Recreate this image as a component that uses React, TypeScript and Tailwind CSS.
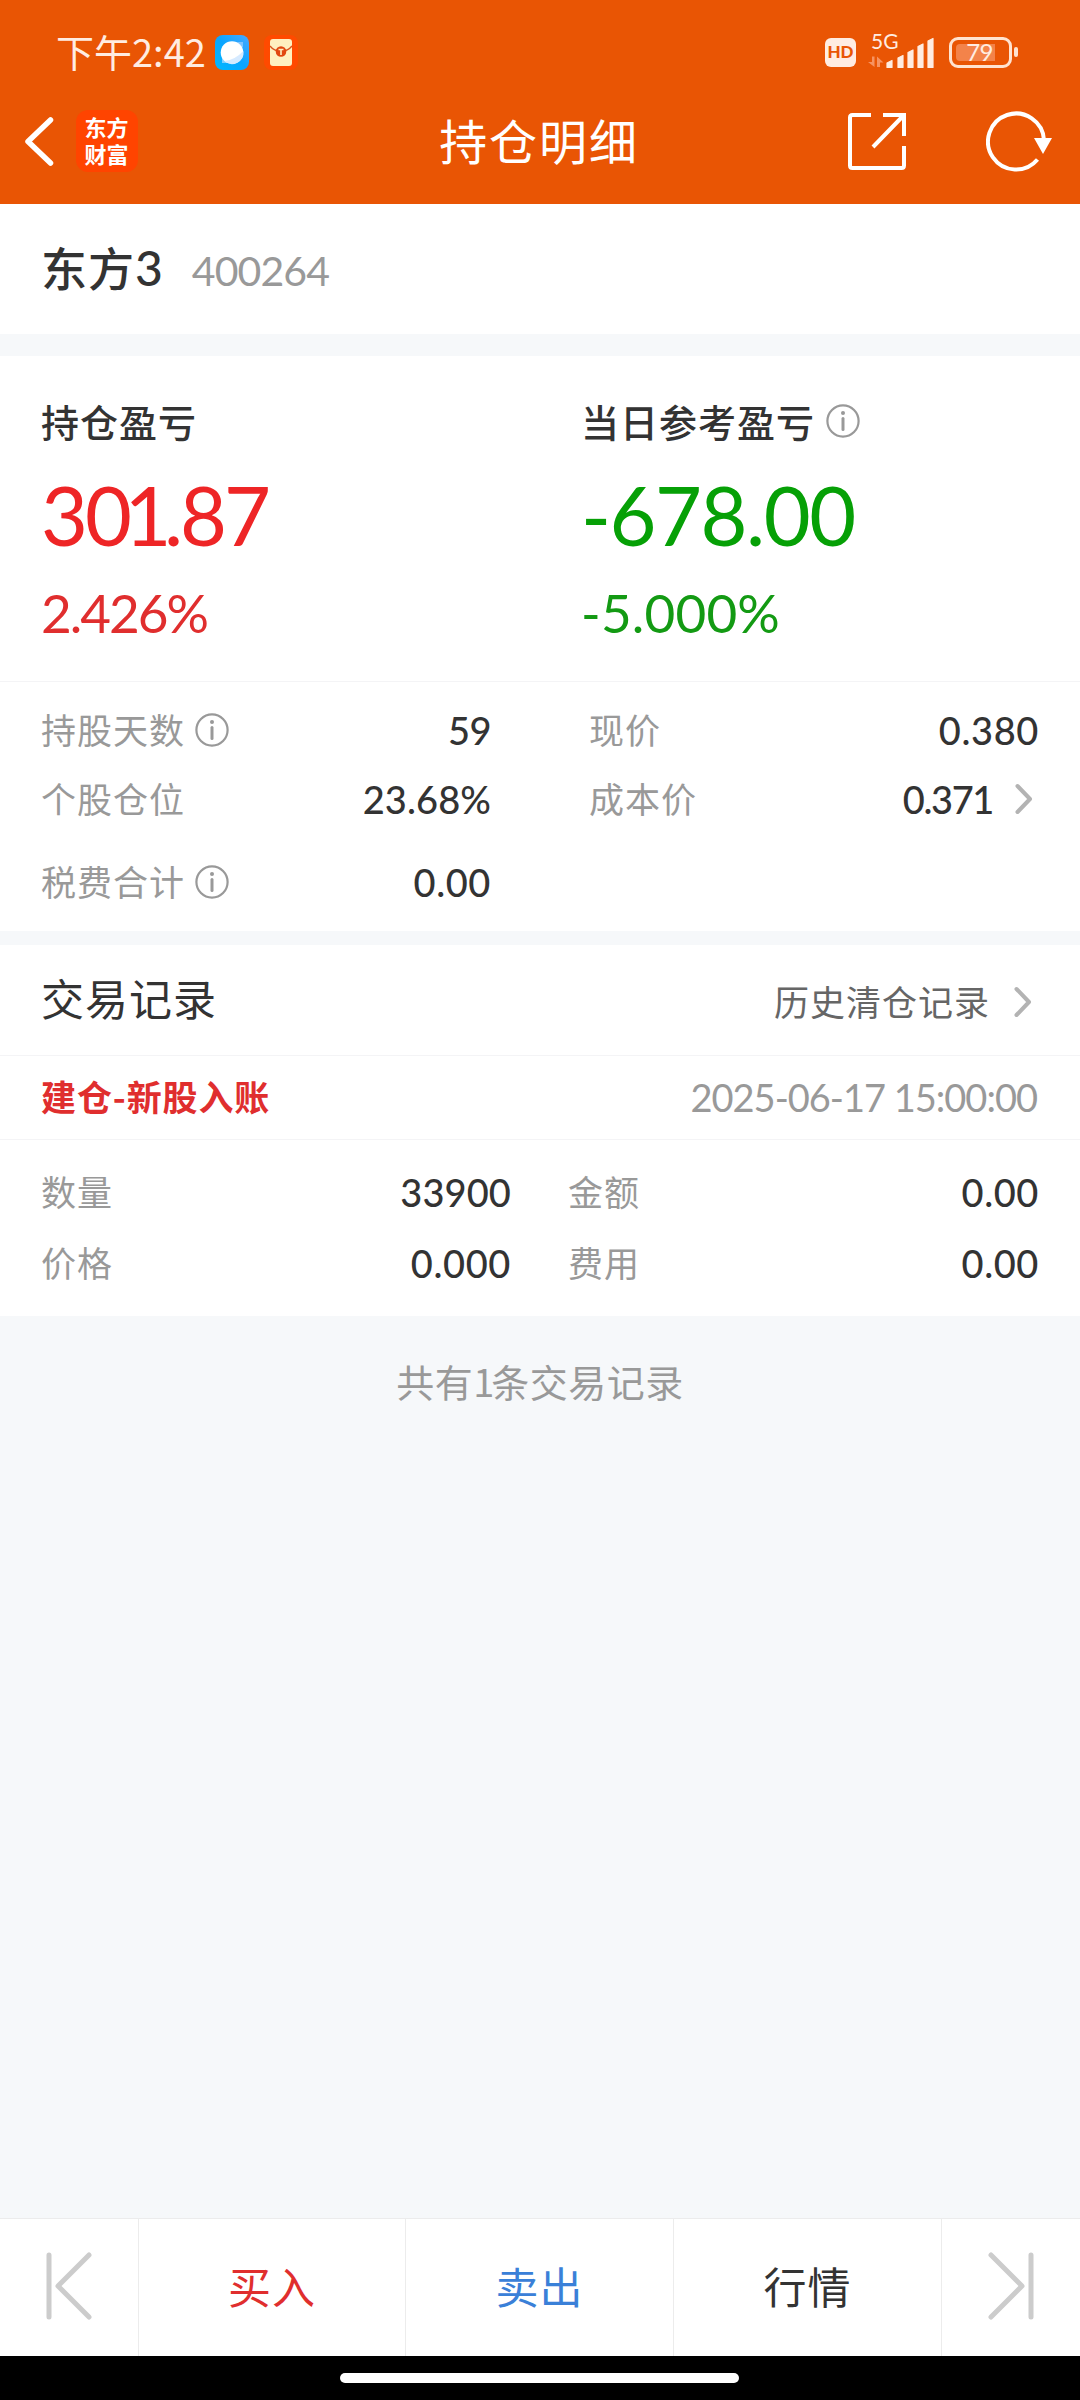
import { FC, ReactNode } from "react";

interface StatProps {
  label: string;
  value: string;
  info?: boolean;
  link?: boolean;
  tracking?: string;
}

const InfoIcon: FC = () => (
  <svg width="34" height="34" viewBox="0 0 34 34" fill="none" className="shrink-0">
    <circle cx="17" cy="17" r="15.6" stroke="#999999" strokeWidth="2.2" />
    <circle cx="17" cy="9" r="2" fill="#999999" />
    <path d="M17 14.5V25.5" stroke="#999999" strokeWidth="3" strokeLinecap="round" />
  </svg>
);

const Chevron: FC = () => (
  <svg width="18" height="32" viewBox="0 0 18 32" fill="none" className="shrink-0">
    <path d="M2.5 3L15 16L2.5 29" stroke="#b3b3b3" strokeWidth="4" strokeLinecap="round" strokeLinejoin="round" />
  </svg>
);

const Stat: FC<StatProps> = ({ label, value, info, link, tracking = "tracking-[0.6px]" }) => (
  <div className="flex h-[50px] items-center justify-between">
    <div className="flex items-center gap-[10px]">
      <span className="pb-[2px] text-[35px] tracking-[1px] text-[#999999]">{label}</span>
      {info && <InfoIcon />}
    </div>
    <div className="flex items-center gap-[22px]">
      <span className={`font-['Lato'] text-[38px] font-medium text-[#333333] ${tracking}`}>{value}</span>
      {link && <div className="mr-[6px]"><Chevron /></div>}
    </div>
  </div>
);

const StatusBar: FC = () => (
  <div className="flex h-[104px] items-center justify-between pl-[56px] pr-[62px]">
    <div className="flex items-center">
      <span className="pb-[3px] text-[38px] leading-none text-[#ffece1]">下午2:42</span>
      <svg width="34" height="35" viewBox="0 0 34 35" className="ml-[9px]">
        <defs>
          <linearGradient id="sky" x1="0" y1="1" x2="1" y2="0">
            <stop offset="0" stopColor="#00b8ff" />
            <stop offset="0.5" stopColor="#0aa5ff" />
            <stop offset="1" stopColor="#4aa8ff" />
          </linearGradient>
        </defs>
        <rect width="34" height="35" rx="8" fill="url(#sky)" />
        <path d="M7 21V28H13Z" fill="#7fd0ff" />
        <path d="M22 7H28V13Z" fill="#7fc3ff" />
        <circle cx="17" cy="17.5" r="11.3" fill="#fff" />
        <path d="M28.3 16A11.3 11.3 0 0 1 9.5 26Q20 25 28.3 16Z" fill="#d6eaff" />
      </svg>
      <svg width="34" height="35" viewBox="0 0 34 35" className="ml-[15px]">
        <rect width="34" height="35" rx="8" fill="#ff4a00" />
        <rect x="6" y="4" width="22" height="27" rx="3" fill="#fff0c0" />
        <path d="M6 11Q10 16 17 16.5Q24 16 28 11" fill="none" stroke="#d9531e" strokeWidth="1.3" />
        <circle cx="17" cy="16.5" r="5.3" fill="#e2470f" />
        <path d="M14.5 14.5H19.5M17 14.5V20" stroke="#fff0c0" strokeWidth="1.6" />
      </svg>
    </div>
    <div className="flex items-center">
      <div className="flex h-[29px] w-[31px] items-center justify-center rounded-[6px] bg-[#ffece1] font-['Lato'] text-[17px] font-black text-[#e95504]">
        HD
      </div>
      <div className="relative ml-3 h-[36px] w-[68px]">
        <span className="absolute left-[3px] top-[-2px] font-['Lato'] text-[21px] leading-[18px] text-[#ffece1]">5G</span>
        <svg width="68" height="36" viewBox="0 0 68 36" className="absolute left-0 top-0">
          <path d="M4 22.5H6.5V33L0 28H4ZM9 33V22.5L15.5 28.5H12V33Z" fill="#f79361" />
          <path
            d="M19 29L24 26.5V33.5H19ZM30 24L35 21.5V33.5H30ZM40 18.5L45 16V33.5H40ZM50 12.5L55 10V33.5H50ZM60 7L65 4.5V33.5H60Z"
            fill="#ffece1"
            stroke="#ffece1"
            strokeWidth="1.2"
            strokeLinejoin="round"
          />
        </svg>
      </div>
      <div className="ml-[13px] flex h-[31px] w-[63px] rounded-[9px] border-[3px] border-[#ffe3d0] p-1">
        <div className="flex w-[39px] items-center justify-end rounded-l-[4px] bg-[#f3834a] pr-[2px] font-['Lato'] text-[24px] leading-none tracking-[-0.5px] text-[#ffece1]">
          79
        </div>
      </div>
      <div className="ml-[2px] h-[10px] w-1 rounded-[2px] bg-[#ffe3d0]" />
    </div>
  </div>
);

const NavBar: FC = () => (
  <div className="flex h-[100px] items-start justify-between pl-6 pr-[26px]">
    <div className="flex w-[300px] items-center pt-[6px]">
      <svg width="31" height="52" viewBox="0 0 31 52" fill="none">
        <path d="M26.5 5L4 26.5L26.5 48" stroke="#fff" strokeWidth="5.5" strokeLinecap="round" strokeLinejoin="round" />
      </svg>
      <div className="ml-[21px] flex h-[62px] w-[62px] justify-center rounded-[12px] bg-[#ff4400] pt-[3px]">
        <div className="w-[45px] break-all text-[22px] font-bold leading-[27px] text-white">东方财富</div>
      </div>
    </div>
    <h1 className="pt-[2px] text-[48px] leading-[66px] tracking-[1.9px] text-white">持仓明细</h1>
    <div className="flex w-[300px] justify-end gap-[80px] pr-[2px] pt-[7px]">
      <svg width="60" height="60" viewBox="0 0 60 60" fill="none" stroke="#fff" strokeWidth="4">
        <path d="M25 4H6.5Q4 4 4 6.5V54.5Q4 57 6.5 57H55.500Q58 57 58 54.500V35" />
        <path d="M37 4H58V25M58 4L27 36" />
      </svg>
      <svg width="66" height="62" viewBox="0 0 66 62" fill="none">
        <path d="M51.5 48.5A28 28 0 1 1 58 29" stroke="#fff" strokeWidth="4" />
        <path d="M48 27H66L57 43Z" fill="#fff" />
      </svg>
    </div>
  </div>
);

const Tab: FC<{ className: string; children: ReactNode }> = ({ className, children }) => (
  <button className={`flex items-center justify-center border-r border-[#ececec] pb-[4px] ${className}`}>{children}</button>
);

export default function App() {
  return (
    <div className="flex h-[2400px] w-[1080px] flex-col overflow-hidden bg-[#f6f8fa] font-['Noto_Sans_CJK_SC',sans-serif]">
      <header className="h-[204px] bg-[#e95504]">
        <StatusBar />
        <NavBar />
      </header>

      <section className="flex h-[130px] items-baseline bg-white pl-[41px] pt-[28px]">
        <span className="text-[46px] font-medium tracking-[1px] text-[#333333]">
          东方<span className="font-['Lato'] text-[48px]">3</span>
        </span>
        <span className="ml-[28px] font-['Lato'] text-[41px] tracking-[-0.9px] text-[#999999]">400264</span>
      </section>

      <section className="mt-[22px] grid h-[326px] grid-cols-[540px_540px] border-b border-[#f4f4f6] bg-white pt-[41px]">
        <div className="pl-[41px]">
          <div className="flex h-[48px] items-center pb-[2px] text-[38px] font-medium tracking-[1px] text-[#333333]">持仓盈亏</div>
          <div className="mt-[22px] font-['Lato'] text-[81px] leading-[96px] tracking-[-3px] text-[#ee2526]">
            3<span className="tracking-[-7.5px]">01</span>.87
          </div>
          <div className="mt-[14px] font-['Lato'] text-[53px] leading-[72px] tracking-[-2px] text-[#e02e2e]">2.426%</div>
        </div>
        <div className="pl-[41px]">
          <div className="flex h-[48px] items-center gap-[11px] text-[38px] font-medium tracking-[1px] text-[#333333]">
            <span className="pb-[2px]">当日参考盈亏</span>
            <InfoIcon />
          </div>
          <div className="mt-[22px] font-['Lato'] text-[81px] leading-[96px] tracking-[-1.5px] text-[#06a006]">-678.00</div>
          <div className="mt-[14px] font-['Lato'] text-[53px] leading-[72px] tracking-[0.2px] text-[#139a13]">-5.000%</div>
        </div>
      </section>

      <section className="grid h-[249px] grid-cols-[450px_450px] justify-between bg-white pl-[41px] pr-[41px] pt-[23px]">
        <div>
          <Stat label="持股天数" value="59" tracking="tracking-[-0.5px]" info />
          <div className="mt-[19px]"><Stat label="个股仓位" value="23.68%" tracking="tracking-[0.1px]" /></div>
          <div className="mt-[33px]"><Stat label="税费合计" value="0.00" info /></div>
        </div>
        <div>
          <Stat label="现价" value="0.380" />
          <div className="mt-[19px]"><Stat label="成本价" value="0.371" tracking="tracking-[-1.4px]" link /></div>
        </div>
      </section>

      <section className="mt-[14px] bg-white">
        <div className="flex h-[111px] items-center justify-between border-b border-[#f4f4f6] pl-[41px] pr-[48px]">
          <h2 className="pb-[5px] text-[43px] tracking-[1px] text-[#333333]">交易记录</h2>
          <div className="flex items-center gap-6 pt-1">
            <span className="pb-[2px] text-[35px] tracking-[1px] text-[#666666]">历史清仓记录</span>
            <Chevron />
          </div>
        </div>
        <div className="flex h-[84px] items-center justify-between border-b border-[#f4f4f6] pl-[41px] pr-[43px]">
          <span className="pb-[3px] text-[35px] font-bold tracking-[0.9px] text-[#e02e2e]">建仓-新股入账</span>
          <span className="font-['Lato'] text-[38px] tracking-[-1px] text-[#999999]">2025-06-17 15:00:00</span>
        </div>
        <div className="grid h-[176px] grid-cols-[470px_471px] content-start justify-between gap-y-[21px] pl-[41px] pr-[41px] pt-[27px]">
          <Stat label="数量" value="33900" tracking="tracking-[0.1px]" />
          <Stat label="金额" value="0.00" />
          <Stat label="价格" value="0.000" />
          <Stat label="费用" value="0.00" />
        </div>
      </section>

      <p className="pt-[36px] text-center text-[38px] tracking-[0.5px] text-[#999999]">
        共有<span className="tracking-[-3px]">1</span>条交易记录
      </p>

      <nav className="mt-auto flex h-[138px] border-t border-[#ececec] bg-white text-[43px] tracking-[1px]">
        <Tab className="w-[139px]">
          <svg width="48" height="68" viewBox="0 0 48 68" fill="none" stroke="#cccccc" strokeWidth="5" strokeLinecap="round" strokeLinejoin="round">
            <path d="M4 3V65M44 3L13 34L44 65" />
          </svg>
        </Tab>
        <Tab className="w-[267px] text-[#e02e2e]">买入</Tab>
        <Tab className="w-[268px] text-[#3a80d8]">卖出</Tab>
        <Tab className="w-[268px] text-[#333333]">行情</Tab>
        <button className="flex flex-1 items-center justify-center pb-[4px]">
          <svg width="48" height="68" viewBox="0 0 48 68" fill="none" stroke="#cccccc" strokeWidth="5" strokeLinecap="round" strokeLinejoin="round">
            <path d="M44 3V65M4 3L35 34L4 65" />
          </svg>
        </button>
      </nav>
      <div className="flex h-[44px] justify-center bg-black pr-[1px] pt-[17px]">
        <div className="h-[10px] w-[399px] rounded-full bg-white" />
      </div>
    </div>
  );
}
